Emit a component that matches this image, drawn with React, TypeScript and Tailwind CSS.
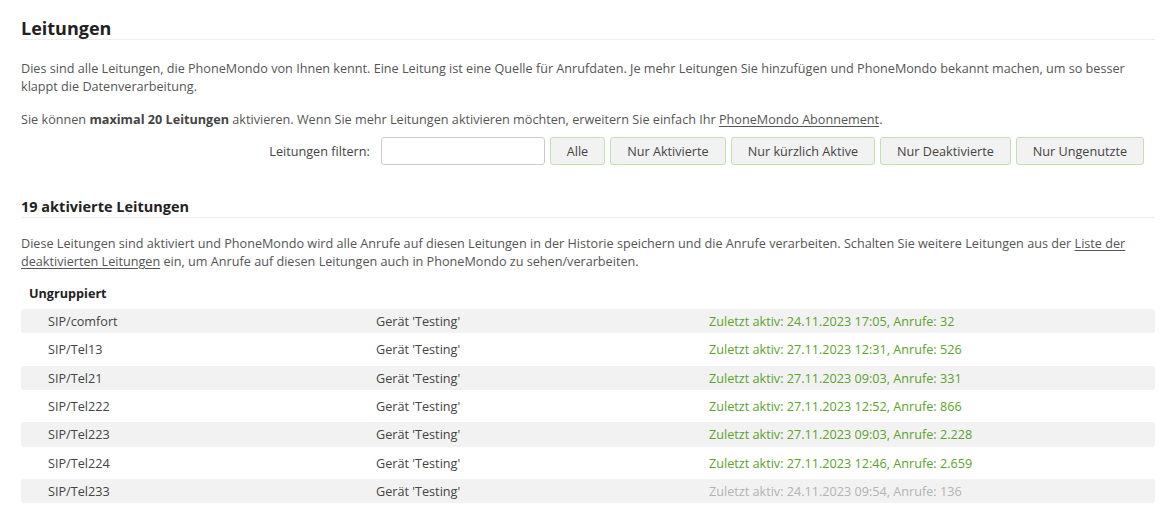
import React from 'react';

const rows = [
  { name: 'SIP/comfort', device: "Gerät 'Testing'", status: 'Zuletzt aktiv: 24.11.2023 17:05, Anrufe: 32', active: true },
  { name: 'SIP/Tel13', device: "Gerät 'Testing'", status: 'Zuletzt aktiv: 27.11.2023 12:31, Anrufe: 526', active: true },
  { name: 'SIP/Tel21', device: "Gerät 'Testing'", status: 'Zuletzt aktiv: 27.11.2023 09:03, Anrufe: 331', active: true },
  { name: 'SIP/Tel222', device: "Gerät 'Testing'", status: 'Zuletzt aktiv: 27.11.2023 12:52, Anrufe: 866', active: true },
  { name: 'SIP/Tel223', device: "Gerät 'Testing'", status: 'Zuletzt aktiv: 27.11.2023 09:03, Anrufe: 2.228', active: true },
  { name: 'SIP/Tel224', device: "Gerät 'Testing'", status: 'Zuletzt aktiv: 27.11.2023 12:46, Anrufe: 2.659', active: true },
  { name: 'SIP/Tel233', device: "Gerät 'Testing'", status: 'Zuletzt aktiv: 24.11.2023 09:54, Anrufe: 136', active: false },
];

const filters = ['Alle', 'Nur Aktivierte', 'Nur kürzlich Aktive', 'Nur Deaktivierte', 'Nur Ungenutzte'];

export default function App() {
  return (
    <div className="min-h-screen bg-white pl-[21px] pr-[10px] pt-[17px] font-['Open_Sans',sans-serif] text-[12.65px] leading-[18px] text-[#555]">
      {/* Header */}
      <h1 className="border-b border-[#eee] text-[18px] leading-[22px] font-bold text-[#222]">Leitungen</h1>

      <p className="mt-[19px]">
        Dies sind alle Leitungen, die PhoneMondo von Ihnen kennt. Eine Leitung ist eine Quelle für Anrufdaten. Je mehr Leitungen Sie hinzufügen und PhoneMondo bekannt machen, um so besser klappt die Datenverarbeitung.
      </p>
      <p className="mt-[15px]">
        Sie können <b className="font-bold text-[#444]">maximal 20 Leitungen</b> aktivieren. Wenn Sie mehr Leitungen aktivieren möchten, erweitern Sie einfach Ihr{' '}
        <a className="underline underline-offset-[1.5px]">PhoneMondo Abonnement</a>.
      </p>

      {/* Filter */}
      <div className="mt-[9px] flex items-center justify-end gap-[5px] pr-[11px]">
        <span className="mr-[6px] text-[#444]">Leitungen filtern:</span>
        <input type="text" className="h-[28px] w-[164px] rounded-[3px] border border-[#ccc] bg-white px-2 outline-none" />
        {filters.map((f) => (
          <button
            key={f}
            className="h-[28px] rounded-[3px] border border-[#c3e0b0] bg-[#f2f2f2] px-[16px] text-[#444]"
          >
            {f}
          </button>
        ))}
      </div>

      {/* Aktivierte */}
      <h2 className="mt-[32px] border-b border-[#eee] text-[14.5px] leading-[20px] font-bold text-[#222]">19 aktivierte Leitungen</h2>
      <p className="mt-[16px]">
        Diese Leitungen sind aktiviert und PhoneMondo wird alle Anrufe auf diesen Leitungen in der Historie speichern und die Anrufe verarbeiten. Schalten Sie weitere Leitungen aus der{' '}
        <a className="underline underline-offset-[1.5px]">Liste der deaktivierten Leitungen</a> ein, um Anrufe auf diesen Leitungen auch in PhoneMondo zu sehen/verarbeiten.
      </p>

      <div className="mt-[14px] pl-[8px] font-bold text-[#222]">Ungruppiert</div>

      <div className="mt-[7px] flex flex-col gap-[4px]">
        {rows.map((r, i) => (
          <div
            key={r.name}
            className={`flex h-[24.33px] items-center rounded-[3px] pl-[27px] ${i % 2 === 0 ? 'bg-[#f2f2f2]' : 'bg-white'}`}
          >
            <div className="w-[328px] text-[#444]">{r.name}</div>
            <div className="w-[333px] text-[#444]">{r.device}</div>
            <div className={r.active ? 'text-[#5ba32b]' : 'text-[#b3b3b3]'}>{r.status}</div>
          </div>
        ))}
      </div>
    </div>
  );
}
